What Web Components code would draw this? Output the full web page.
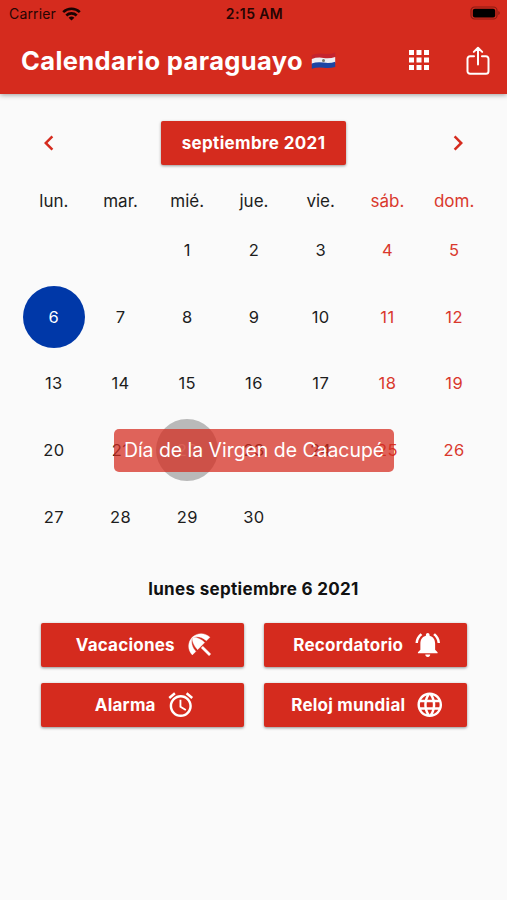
<!DOCTYPE html>
<html lang="es">
<head>
<meta charset="utf-8">
<title>Calendario paraguayo</title>
<style>
  body {
    margin: 0;
    background: #fafafa;
    font-family: Inter, Roboto, sans-serif;
    --red: #d52b1e;
    --blue: #0038a8;
  }
</style>
</head>
<body>
<calendar-app></calendar-app>

<script>
const icons = {
  apps: '<path d="M4 8h4V4H4v4zm6 12h4v-4h-4v4zm-6 0h4v-4H4v4zm0-6h4v-4H4v4zm6 0h4v-4h-4v4zm6-10v4h4V4h-4zm-6 4h4V4h-4v4zm6 6h4v-4h-4v4zm0 6h4v-4h-4v4z"/>',
  left: '<path d="M15.41 7.41L14 6l-6 6 6 6 1.41-1.41L10.83 12z"/>',
  right: '<path d="M10 6L8.59 7.41 13.17 12l-4.58 4.59L10 18l6-6z"/>',
  share: '<path d="M8.6 7.9H5.2A2.2 2.2 0 0 0 3 10.1v10.6a2.2 2.2 0 0 0 2.2 2.2h13.6a2.2 2.2 0 0 0 2.2-2.2V10.1a2.2 2.2 0 0 0-2.2-2.2H15.4M12 15V.8M8.4 4.2 12 .7 15.6 4.2" fill="none" stroke="currentColor" stroke-width="1.7" stroke-linecap="round" stroke-linejoin="round"/>',
  beach: '<path d="M13.127 14.56l1.43-1.43 6.44 6.443L19.57 21zm4.293-5.73l2.86-2.86c-3.95-3.95-10.35-3.96-14.3-.02 3.93-1.3 8.31-.25 11.44 2.88zM5.95 5.98c-3.94 3.95-3.93 10.35.02 14.3l2.86-2.86C5.7 14.29 4.65 9.91 5.95 5.98zm.02-.02l-.01.01c-.38 3.01 1.17 6.88 4.3 10.02l5.73-5.73c-3.13-3.13-7.01-4.68-10.02-4.3z" stroke="currentColor" stroke-width="0.3"/>',
  bell: '<path d="M7.58 4.08L6.15 2.65C3.75 4.48 2.17 7.3 2.03 10.5h2c.15-2.65 1.51-4.97 3.55-6.42zm12.39 6.42h2c-.15-3.2-1.73-6.02-4.12-7.85l-1.42 1.43c2.02 1.45 3.39 3.77 3.54 6.42zM18 11c0-3.07-1.64-5.64-4.5-6.32V4c0-.83-.67-1.5-1.5-1.5s-1.5.67-1.5 1.5v.68C7.63 5.36 6 7.92 6 11v5l-2 2v1h16v-1l-2-2v-5zm-6 11c.14 0 .27-.01.4-.04.65-.14 1.18-.58 1.44-1.18.1-.24.15-.5.15-.78h-4c.01 1.1.9 2 2.01 2z"/>',
  alarm: '<path d="M22 5.72l-4.6-3.86-1.29 1.53 4.6 3.86L22 5.72zM7.88 3.39L6.6 1.86 2 5.71l1.29 1.53 4.59-3.85zM12.5 8H11v6l4.75 2.85.75-1.23-4-2.37V8zM12 4c-4.97 0-9 4.03-9 9s4.02 9 9 9c4.97 0 9-4.03 9-9s-4.03-9-9-9zm0 16c-3.87 0-7-3.13-7-7s3.13-7 7-7 7 3.13 7 7-3.13 7-7 7z"/>',
  globe: '<path d="M11.99 2C6.47 2 2 6.48 2 12s4.47 10 9.99 10C17.52 22 22 17.52 22 12S17.52 2 11.99 2zm6.93 6h-2.95c-.32-1.25-.78-2.45-1.38-3.56 1.84.63 3.37 1.91 4.33 3.56zM12 4.04c.83 1.2 1.48 2.53 1.91 3.96h-3.82c.43-1.43 1.08-2.76 1.91-3.96zM4.26 14C4.1 13.36 4 12.69 4 12s.1-1.36.26-2h3.38c-.08.66-.14 1.32-.14 2s.06 1.34.14 2H4.26zm.82 2h2.95c.32 1.25.78 2.45 1.38 3.56-1.84-.63-3.37-1.9-4.33-3.56zm2.95-8H5.08c.96-1.66 2.49-2.93 4.33-3.56C8.81 5.55 8.35 6.75 8.03 8zM12 19.96c-.83-1.2-1.48-2.53-1.91-3.96h3.82c-.43 1.43-1.08 2.76-1.91 3.96zM14.34 14H9.66c-.09-.66-.16-1.32-.16-2s.07-1.35.16-2h4.68c.09.65.16 1.32.16 2s-.07 1.34-.16 2zm.25 5.56c.6-1.11 1.06-2.31 1.38-3.56h2.95c-.96 1.65-2.49 2.93-4.33 3.56zM16.36 14c.08-.66.14-1.32.14-2s-.06-1.34-.14-2h3.38c.16.64.26 1.31.26 2s-.1 1.36-.26 2h-3.38z"/>'
}

/**
 * Clones a markup string into an open shadow root.
 */
function render (host, html) {
  const template = document.createElement('template')
  template.innerHTML = html
  host.attachShadow({ mode: 'open' }).appendChild(template.content.cloneNode(true))
}

customElements.define('app-icon',
  /**
   * An icon picked by its name.
   */
  class extends HTMLElement {
    constructor () {
      super()
      render(this, `
        <style>
          :host { display: block; width: 30px; height: 30px; flex: none; }
          svg { display: block; width: 100%; height: 100%; fill: currentColor; overflow: visible; }
        </style>
        <svg viewBox="0 0 24 24">${icons[this.getAttribute('name')]}</svg>
      `)
    }
  }
)

customElements.define('status-bar',
  /**
   * The carrier, the clock and the battery.
   */
  class extends HTMLElement {
    constructor () {
      super()
      render(this, `
        <style>
          :host {
            display: grid;
            grid-template-columns: 1fr auto 1fr;
            align-items: center;
            height: 27px;
            padding: 0 7px 0 9px;
            color: #260503;
            font-size: 14px;
          }
          .carrier { display: flex; align-items: center; gap: 6px; letter-spacing: 0.15px; }
          .time { font-weight: 600; letter-spacing: 0.4px; }
          .battery { justify-self: end; margin-bottom: 2px; }
          svg { display: block; }
        </style>
        <div class="carrier">
          <span>Carrier</span>
          <svg width="19" height="14" viewBox="0 0 19 14" fill="none" stroke="#1a0302" stroke-width="2.6">
            <path d="M1.2 5.1a12 12 0 0 1 16.6 0M4.3 8.5a7.5 7.5 0 0 1 10.4 0"/>
            <path d="M9.5 13.6 6.6 10.8a4.2 4.2 0 0 1 5.8 0z" fill="#1a0302" stroke="none"/>
          </svg>
        </div>
        <span class="time">2:15 AM</span>
        <svg class="battery" width="30" height="14" viewBox="0 0 30 14">
          <rect x="1" y="1" width="26" height="12" rx="3.6" fill="none" stroke="#8b1c13" stroke-width="1.2"/>
          <rect x="2.8" y="2.7" width="22.4" height="8.8" rx="2" fill="#000"/>
          <path d="M28.3 5v4q1.5-.6 1.5-2t-1.5-2z" fill="#8b1c13"/>
        </svg>
      `)
    }
  }
)

customElements.define('app-header',
  /**
   * The red bar with the title and the two actions.
   */
  class extends HTMLElement {
    constructor () {
      super()
      render(this, `
        <style>
          :host {
            display: block;
            height: 94px;
            background: var(--red);
            color: #fff;
            box-shadow: 0 1px 5px rgba(0, 0, 0, 0.38);
          }
          .bar { display: flex; align-items: center; height: 67px; padding: 0 15px 0 21px; }
          h1 {
            margin: 0;
            font-size: 25.5px;
            font-weight: 700;
            letter-spacing: 0.38px;
            line-height: 30px;
            white-space: nowrap;
          }
          .flag { width: 25px; height: 18px; margin-left: 8px; }
          .apps { margin: 0 0 2px auto; }
          .share { width: 28px; height: 28px; margin-left: 30px; }
        </style>
        <status-bar></status-bar>
        <div class="bar">
          <h1><slot></slot></h1>
          <svg class="flag" viewBox="0 0 25 18">
            <path d="M.8 3Q6 .8 12.5 1.8T24.2.6V5.2Q18.5 7.2 12.5 6.4T.8 7.4z" fill="#c4232d"/>
            <path d="M.8 7Q6 5 12.5 5.9T24.2 4.9V10.7Q18.5 12.3 12.5 11.3T.8 12.2z" fill="#eeeef2"/>
            <path d="M.8 11.6Q6 9.5 12.5 10.6T24.2 9.7V15Q18.5 16.7 12.5 15.8T.8 16.8z" fill="#1c45a3"/>
            <circle cx="12.5" cy="8.4" r="1.5" fill="#77786c"/>
          </svg>
          <app-icon class="apps" name="apps"></app-icon>
          <app-icon class="share" name="share"></app-icon>
        </div>
      `)
    }
  }
)

customElements.define('month-switcher',
  /**
   * The month label between two arrows.
   */
  class extends HTMLElement {
    constructor () {
      super()
      render(this, `
        <style>
          :host {
            display: flex;
            justify-content: space-between;
            align-items: center;
            height: 43px;
            padding: 0 34px;
            color: var(--red);
          }
          .month {
            width: 185px;
            border-radius: 2px;
            background: var(--red);
            box-shadow: 0 1px 3px rgba(0, 0, 0, 0.4);
            color: #fff;
            font-size: 17px;
            font-weight: 700;
            letter-spacing: 0.35px;
            line-height: 44px;
            text-align: center;
          }
        </style>
        <app-icon name="left"></app-icon>
        <div class="month"><slot></slot></div>
        <app-icon name="right"></app-icon>
      `)
    }
  }
)

customElements.define('month-grid',
  /**
   * The weekdays and the days of one month.
   */
  class extends HTMLElement {
    constructor () {
      super()
      const names = ['lun.', 'mar.', 'mié.', 'jue.', 'vie.', 'sáb.', 'dom.']
      const offset = Number(this.getAttribute('offset'))
      const length = Number(this.getAttribute('length'))
      const selected = Number(this.getAttribute('selected'))
      const pressed = Number(this.getAttribute('pressed'))

      let days = '<i></i>'.repeat(offset)
      for (let day = 1; day <= length; day++) {
        const classes = []
        if ((day + offset - 1) % 7 > 4) classes.push('weekend')
        if (day === selected) classes.push('selected')
        if (day === pressed) classes.push('pressed')
        days += `<div class="${classes.join(' ')}"><span>${day}</span></div>`
      }

      render(this, `
        <style>
          :host {
            display: block;
            position: relative;
            margin: 0 19.5px 0 20.5px;
            color: #1d1d1d;
            font-size: 16.5px;
          }
          .names, .days { display: grid; grid-template-columns: repeat(7, 1fr); text-align: center; }
          .names { line-height: 32px; font-size: 17px; }
          .days { grid-auto-rows: 66.6px; letter-spacing: 0.4px; }
          .days div { display: flex; justify-content: center; align-items: center; }
          .days span { width: 62px; border-radius: 50%; line-height: 62px; }
          .weekend { color: #d9382c; }
          .selected span { background: var(--blue); color: #fff; }
          .pressed span { background: #b9b9b9; color: #eee; }
          ::slotted(*) { position: absolute; left: 93.5px; top: 244px; }
        </style>
        <div class="names">
          ${names.map((name, i) => `<span class="${i > 4 ? 'weekend' : ''}">${name}</span>`).join('')}
        </div>
        <div class="days">${days}</div>
        <slot></slot>
      `)
    }
  }
)

customElements.define('holiday-toast',
  /**
   * The translucent label that covers the calendar.
   */
  class extends HTMLElement {
    constructor () {
      super()
      render(this, `
        <style>
          :host {
            width: 280px;
            height: 43px;
            border-radius: 5px;
            background: rgba(213, 43, 30, 0.73);
            color: #fff;
            font-size: 19.4px;
            line-height: 43px;
            text-align: center;
            white-space: nowrap;
          }
        </style>
        <slot></slot>
      `)
    }
  }
)

customElements.define('action-button',
  /**
   * A raised button with a label and an icon.
   */
  class extends HTMLElement {
    constructor () {
      super()
      render(this, `
        <style>
          :host {
            display: flex;
            justify-content: center;
            align-items: center;
            gap: 10px;
            box-sizing: border-box;
            height: 44px;
            padding-left: 5px;
            border-radius: 2px;
            background: var(--red);
            box-shadow: 0 1px 3px rgba(0, 0, 0, 0.42);
            color: #fff;
            font-size: 17px;
            font-weight: 700;
            letter-spacing: 0.22px;
            white-space: nowrap;
          }
          app-icon { width: 29.5px; height: 29.5px; }
        </style>
        <slot></slot>
        <app-icon name="${this.getAttribute('icon')}"></app-icon>
      `)
    }
  }
)

customElements.define('calendar-app',
  /**
   * The whole screen.
   */
  class extends HTMLElement {
    constructor () {
      super()
      render(this, `
        <style>
          :host { display: block; height: 900px; overflow: hidden; }
          month-switcher { margin-top: 27px; }
          month-grid { margin-top: 21px; }
          h2 {
            margin: 25px 0 0;
            color: #111;
            font-size: 17px;
            font-weight: 700;
            letter-spacing: 0.33px;
            line-height: 28px;
            text-align: center;
          }
          .actions { display: grid; grid-template-columns: 203px 203px; gap: 16px 20px; margin: 20px 0 0 41px; }
        </style>
        <app-header>Calendario paraguayo</app-header>
        <month-switcher>septiembre 2021</month-switcher>
        <month-grid offset="2" length="30" selected="6" pressed="22">
          <holiday-toast>Día de la Virgen de Caacupé</holiday-toast>
        </month-grid>
        <h2>lunes septiembre 6 2021</h2>
        <div class="actions">
          <action-button icon="beach">Vacaciones</action-button>
          <action-button icon="bell">Recordatorio</action-button>
          <action-button icon="alarm">Alarma</action-button>
          <action-button icon="globe">Reloj mundial</action-button>
        </div>
      `)
    }
  }
)
</script>
</body>
</html>
